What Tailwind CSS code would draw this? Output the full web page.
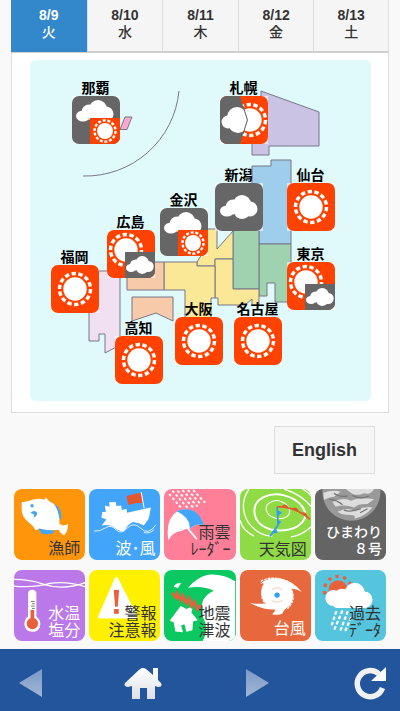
<!DOCTYPE html>
<html lang="ja">
<head>
  <meta charset="UTF-8">
  <meta name="viewport" content="width=device-width, initial-scale=1.0">
  <title>海の天気</title>
  <script src="https://cdn.jsdelivr.net/npm/@tailwindcss/browser@4"></script>
</head>
<body class="bg-[#f9f9f9] min-h-screen flex flex-col font-['Liberation_Sans','Noto_Sans_CJK_JP',sans-serif] text-[#333]">

  <!-- shared weather symbols -->
  <svg class="absolute size-0" aria-hidden="true">
    <defs>
      <g id="sun">
        <circle r="11.700" fill="#fff"/>
        <circle r="15.500" fill="none" stroke="#fff" stroke-width="3.400" pathLength="42" stroke-dasharray="1.900 1.100"/>
      </g>
      <g id="cloud" fill="#fff">
        <ellipse cx="-12" cy="4" rx="7" ry="5.500"/>
        <circle cx="-6" cy="0" r="7.500"/>
        <circle cx="3" cy="-3" r="9"/>
        <circle cx="11" cy="2" r="7.500"/>
        <ellipse cx="3" cy="7" rx="7" ry="5"/>
      </g>
      <clipPath id="tile"><rect width="48" height="48" rx="7"/></clipPath>
      <clipPath id="left-half"><path d="M0 0H20L27 24L20 48H0Z"/></clipPath>
      <symbol id="w-sun" viewBox="0 0 48 48">
        <rect width="48" height="48" fill="#fff" opacity=".6"/>
        <rect width="48" height="48" rx="7" fill="#ff4200"/>
        <use href="#sun" x="24" y="24"/>
      </symbol>
      <symbol id="w-cloud" viewBox="0 0 48 48">
        <rect width="48" height="48" fill="#fff" opacity=".6"/>
        <rect width="48" height="48" rx="7" fill="#666"/>
        <use href="#cloud" x="24" y="24"/>
      </symbol>
      <symbol id="w-cloud-sun" viewBox="0 0 48 48">
        <rect width="48" height="48" fill="#fff" opacity=".6"/>
        <g clip-path="url(#tile)">
          <rect width="48" height="48" fill="#666"/>
          <use href="#cloud" x="23" y="16"/>
          <rect x="18" y="22" width="30" height="26" fill="#ff4200"/>
          <use href="#sun" transform="translate(33 35) scale(.68)"/>
        </g>
      </symbol>
      <symbol id="w-sun-cloud" viewBox="0 0 48 48">
        <rect width="48" height="48" fill="#fff" opacity=".6"/>
        <g clip-path="url(#tile)">
          <rect width="48" height="48" fill="#ff4200"/>
          <use href="#sun" x="19" y="20"/>
          <rect x="18" y="22" width="30" height="26" fill="#666"/>
          <use href="#cloud" transform="translate(33 35) scale(.74)"/>
        </g>
      </symbol>
      <symbol id="w-cloud-then-sun" viewBox="0 0 48 48">
        <rect width="48" height="48" fill="#fff" opacity=".6"/>
        <g clip-path="url(#tile)">
          <rect width="48" height="48" fill="#ff4200"/>
          <use href="#sun" x="30" y="24"/>
          <g clip-path="url(#left-half)">
            <rect width="48" height="48" fill="#666"/>
            <circle cx="8" cy="26" r="6.500" fill="#fff"/>
            <circle cx="17" cy="21" r="10" fill="#fff"/>
            <circle cx="18" cy="27" r="10" fill="#fff"/>
          </g>
          <path d="M23 10L27.500 24L23 38" fill="none" stroke="#666"/>
        </g>
      </symbol>
    </defs>
  </svg>

  <main class="px-[11px]">
    <nav class="grid grid-cols-5 h-[53px] border-b-2 border-[#d0d0d0] text-center text-sm font-bold leading-[17px]">
      <a href="#d9" class="bg-[#3388cc] text-white pt-[7px] -mb-px">8/9<br><span class="font-medium">火</span></a>
      <a href="#d10" class="bg-[#f5f5f5] border-l border-[#ddd] pt-[7px]">8/10<br><span class="font-medium">水</span></a>
      <a href="#d11" class="bg-[#f5f5f5] border-l border-[#ddd] pt-[7px]">8/11<br><span class="font-medium">木</span></a>
      <a href="#d12" class="bg-[#f5f5f5] border-l border-[#ddd] pt-[7px]">8/12<br><span class="font-medium">金</span></a>
      <a href="#d13" class="bg-[#f5f5f5] border-l border-r border-[#ddd] pt-[7px]">8/13<br><span class="font-medium">土</span></a>
    </nav>

    <section class="bg-white border border-t-0 border-[#ddd] pt-[7px] pb-[11px]">
      <div class="relative w-[341px] mx-auto rounded-md bg-[#e0fafb] text-sm leading-4 font-bold text-black">
        <svg viewBox="30 60 341 341" class="block w-full" stroke="#778" stroke-width="1">
          <path d="M179 91A94 94 0 0 1 83 176" fill="none"/>
          <path d="M125 117H132L127 129.500H120Z" fill="#f9a8d0"/>
          <path d="M261 91L319 112V146H269V155H252V130H261Z" fill="#cbc3e3"/>
          <path d="M252 166H271V160H291V244H259V215H252Z" fill="#9fcdec"/>
          <path d="M259 244H291V302H275V283H267V296H259Z" fill="#9fd2ae"/>
          <path d="M233 225H259V289H233Z" fill="#9fd2ae"/>
          <path d="M200 229H217V249L233 231V259H215V266H197V262L202 254Z" fill="#fbe896"/>
          <path d="M215 259H233V289H259V305H252V299L245 305H218V298H215Z" fill="#fbe896"/>
          <path d="M164 262H197V266H215V298H211V320H185V290H164Z" fill="#fbe896"/>
          <path d="M127 262H164V290H127Z" fill="#f7cba9"/>
          <path d="M132 297H173V321L156 313L132 321Z" fill="#f7cba9"/>
          <path d="M89 271H120V345L105 353V334H99V341H89Z" fill="#f0e0f2"/>
        </svg>

        <a href="#naha" class="absolute left-[42px] top-[20px] w-12 flex flex-col items-center whitespace-nowrap">那覇<svg class="size-12"><use href="#w-cloud-sun"/></svg></a>
        <a href="#sapporo" class="absolute left-[190px] top-[20px] w-12 flex flex-col items-center whitespace-nowrap">札幌<svg class="size-12"><use href="#w-cloud-then-sun"/></svg></a>
        <a href="#niigata" class="absolute left-[185px] top-[107px] w-12 flex flex-col items-center whitespace-nowrap">新潟<svg class="size-12"><use href="#w-cloud"/></svg></a>
        <a href="#sendai" class="absolute left-[257px] top-[107px] w-12 flex flex-col items-center whitespace-nowrap">仙台<svg class="size-12"><use href="#w-sun"/></svg></a>
        <a href="#kanazawa" class="absolute left-[130px] top-[132px] w-12 flex flex-col items-center whitespace-nowrap">金沢<svg class="size-12"><use href="#w-cloud-sun"/></svg></a>
        <a href="#hiroshima" class="absolute left-[77px] top-[154px] w-12 flex flex-col items-center whitespace-nowrap">広島<svg class="size-12"><use href="#w-sun-cloud"/></svg></a>
        <a href="#fukuoka" class="absolute left-[21px] top-[189px] w-12 flex flex-col items-center whitespace-nowrap">福岡<svg class="size-12"><use href="#w-sun"/></svg></a>
        <a href="#tokyo" class="absolute left-[257px] top-[186px] w-12 flex flex-col items-center whitespace-nowrap">東京<svg class="size-12"><use href="#w-sun-cloud"/></svg></a>
        <a href="#kochi" class="absolute left-[85px] top-[260px] w-12 flex flex-col items-center whitespace-nowrap">高知<svg class="size-12"><use href="#w-sun"/></svg></a>
        <a href="#osaka" class="absolute left-[145px] top-[241px] w-12 flex flex-col items-center whitespace-nowrap">大阪<svg class="size-12"><use href="#w-sun"/></svg></a>
        <a href="#nagoya" class="absolute left-[204px] top-[241px] w-12 flex flex-col items-center whitespace-nowrap">名古屋<svg class="size-12"><use href="#w-sun"/></svg></a>
      </div>
    </section>

    <div class="flex justify-end pt-[13px] pr-[14px]">
      <button type="button" class="h-12 px-[17px] border border-[#ddd] bg-[#f6f6f6] text-lg font-bold">English</button>
    </div>
  </main>

  <!-- menu -->
  <div class="grid grid-cols-5 gap-x-1 gap-y-[10px] px-[14px] pt-[15px] pb-2 font-['Noto_Sans_CJK_JP',sans-serif] text-base leading-[17px] text-right">
    <a href="#fisher" class="relative aspect-square rounded-lg overflow-hidden bg-[#ff950a] text-[#333]">
      <svg viewBox="43 27 213 213" class="block w-full">
        <path d="M158 70Q188 82 184 118L170 112Z" fill="#42a5f5"/>
        <path d="M115 142L125 160Q148 166 162 158V140Z" fill="#42a5f5"/>
        <path d="M66 67L84 64Q110 52 134 59L138 52Q150 68 162 71Q180 95 179 132Q192 140 205 132Q204 155 193 166Q183 162 176 149Q145 153 118 145L108 151Q100 135 84 124Q66 108 66 88Z" fill="#fff"/>
        <circle cx="97" cy="77" r="5" fill="#42a5f5"/>
        <path d="M92 98Q105 88 112 98Q113 108 102 112L103 103Z" fill="#42a5f5"/>
      </svg>
      <span class="absolute right-[5px] bottom-1 whitespace-nowrap">漁師</span>
    </a>
    <a href="#wave" class="relative aspect-square rounded-lg overflow-hidden bg-[#42a5fa] text-white">
      <svg viewBox="268 27 213 213" class="block w-full">
        <path d="M306 136L320 118L305 112L308 96L318 96L316 76L330 80L328 67L348 66L350 78L364 76L366 90L380 86L382 98L453 82L447 115L432 136Q418 128 400 126Q385 132 374 151Q360 158 342 141Q328 132 306 136Z" fill="#fff"/>
        <path d="M283 153Q300 155 318 143Q334 132 350 150Q366 164 382 144Q402 124 422 144Q446 168 468 134M432 157Q450 162 463 148" fill="none" stroke="#fff" stroke-width="2.500"/>
        <path d="M380 48Q400 42 425 38L430 68Q405 68 386 75Z" fill="#e4572e"/>
        <path d="M424 36L433 84" stroke="#fff" stroke-width="3"/>
      </svg>
      <span class="absolute right-[5px] bottom-1 whitespace-nowrap">波･風</span>
    </a>
    <a href="#radar" class="relative aspect-square rounded-lg overflow-hidden bg-[#ff7f99] text-[#333]">
      <svg viewBox="493 27 213 213" class="block w-full">
        <g stroke="#fff" stroke-width="6" stroke-linecap="round" stroke-dasharray="3 12">
          <path d="M510 44L545 84M520 34L562 82M535 34L578 80M550 32L592 78M566 32L605 75M582 32L614 66"/>
        </g>
        <path d="M506 180Q496 115 535 92Q590 75 613 136Q590 128 570 146Q560 142 546 153Q520 155 506 180Z" fill="#fff"/>
        <path d="M530 93Q592 72 613 136Q592 128 570 146Q572 112 530 93Z" fill="#42a5fa"/>
        <path d="M560 140L590 176" stroke="#fff" stroke-width="5" stroke-linecap="round"/>
      </svg>
      <span class="absolute right-[5px] bottom-[3px] whitespace-nowrap">雨雲<br>ﾚｰﾀﾞｰ</span>
    </a>
    <a href="#chart" class="relative aspect-square rounded-lg overflow-hidden bg-[#8edb45] text-[#333]">
      <svg viewBox="118 27 213 213" class="block w-full">
        <g fill="none" stroke="#fff">
          <path d="M196 88C194 68 225 55 244 66C265 75 275 98 258 110C235 124 200 112 196 88Z" stroke-width="3"/>
          <path d="M161 94C160 52 210 36 250 46C300 58 328 100 305 125C285 150 245 155 210 148C180 140 162 120 161 94Z" stroke-width="6"/>
          <path d="M145 27C115 70 125 130 180 160Q195 168 215 168M250 27Q305 45 331 80M331 140Q300 168 270 170M305 27Q320 35 331 48M118 120Q125 150 160 168" stroke-width="4"/>
        </g>
        <path d="M229 80L232 135L208 168" fill="none" stroke="#2f9df5" stroke-width="5"/>
        <path d="M230 90L244 98L231 108ZM231 118L242 126L231 136ZM226 146L231 158L215 160Z" fill="#2f9df5"/>
        <path d="M229 80Q285 80 328 118" fill="none" stroke="#e4572e" stroke-width="5"/>
        <path d="M242 79Q252 66 264 82ZM272 86Q288 76 295 95ZM300 98Q318 92 320 110Z" fill="#e4572e"/>
      </svg>
      <span class="absolute right-[4px] bottom-[3px] whitespace-nowrap">天気図</span>
    </a>
    <a href="#himawari" class="relative aspect-square rounded-lg overflow-hidden bg-[#646464] text-white">
      <svg viewBox="343 27 213 213" class="block w-full">
        <circle cx="452" cy="35" r="87" fill="#999"/>
        <path d="M368 38Q395 28 420 35L400 50Q380 52 370 60ZM435 27H520Q510 45 490 40Q465 50 450 38ZM395 66Q430 50 450 62Q480 50 520 58L500 72Q475 70 460 82Q430 72 405 80ZM410 95Q440 80 462 92Q490 78 515 82Q495 108 460 116Q470 104 440 104Q425 106 410 95Z" fill="#ddd"/>
        <path d="M385 58Q410 60 425 74M455 46Q480 60 505 48M430 90Q450 98 480 86M478 98L500 86M400 40Q415 52 440 48" fill="none" stroke="#777" stroke-width="4"/>
      </svg>
      <span class="absolute right-[4px] bottom-[3px] text-sm leading-[17px] font-medium whitespace-nowrap">ひまわり<br>８号</span>
    </a>
    <a href="#temp" class="relative aspect-square rounded-lg overflow-hidden bg-[#bb78e8] text-white">
      <svg viewBox="43 28 213 213" class="block w-full">
        <path d="M43 56Q90 56 130 70Q190 90 256 66M43 76Q100 82 150 68Q200 60 256 78" fill="none" stroke="#fff" stroke-width="4"/>
        <path d="M85 98Q86 87 97 87Q109 87 110 98V167Q122 177 122 190Q119 213 98 213Q76 211 74 190Q75 174 85 167Z" fill="#fff"/>
        <circle cx="98" cy="188" r="17" fill="#e8603c"/>
        <path d="M98 148V180" stroke="#e8603c" stroke-width="11"/>
        <path d="M94 122H105M97 129H105M94 136H105M97 143H105" stroke="#555" stroke-width="2.500"/>
      </svg>
      <span class="absolute right-[5px] bottom-[3px] whitespace-nowrap">水温<br>塩分</span>
    </a>
    <a href="#warning" class="relative aspect-square rounded-lg overflow-hidden bg-[#fff000] text-[#333]">
      <svg viewBox="268 28 213 213" class="block w-full">
        <path d="M350 54L408 168H300Z" fill="#fff" stroke="#fff" stroke-width="10" stroke-linejoin="round"/>
        <path d="M342 88H358L354 138H346ZM343 145H357V159H343Z" fill="#e8603c"/>
      </svg>
      <span class="absolute right-[4px] bottom-[3px] whitespace-nowrap">警報<br>注意報</span>
    </a>
    <a href="#quake" class="relative aspect-square rounded-lg overflow-hidden bg-[#0bc861] text-[#333]">
      <svg viewBox="493 28 213 213" class="block w-full">
        <path d="M522 78Q530 64 545 68Q538 74 535 82ZM565 81Q590 50 625 42Q670 38 706 62V241H608Q630 205 610 170Q600 145 610 118Q620 100 642 90Q610 74 565 81Z" fill="#fff"/>
        <path d="M517 96L530 112L532 98L545 120L550 104L560 128L568 112L575 138L584 122L592 146L604 132" fill="none" stroke="#e8603c" stroke-width="8"/>
        <path d="M510 180L543 136L560 145L570 140L578 145L575 155L594 178L580 182L578 208L560 213L554 190L544 194L550 214L527 212L522 184Z" fill="#fff"/>
      </svg>
      <span class="absolute right-[5px] bottom-[3px] whitespace-nowrap">地震<br>津波</span>
    </a>
    <a href="#typhoon" class="relative aspect-square rounded-lg overflow-hidden bg-[#e6683c] text-white">
      <svg viewBox="118 28 213 213" class="block w-full">
        <path d="M178 70Q200 48 240 54Q276 60 303 94Q288 84 272 84Q284 115 264 137Q250 145 245 158Q236 164 214 160Q225 152 222 146Q190 148 148 127Q175 131 195 128Q176 108 184 78Q196 62 178 70Z" fill="#fff"/>
        <path d="M180 62Q225 38 276 72M272 88Q286 118 260 144M186 86Q178 108 192 126" fill="none" stroke="#fff" stroke-width="4" stroke-dasharray="8 3"/>
        <path d="M212 88Q228 74 246 88M246 118Q228 130 212 118" fill="none" stroke="#f2b6a0" stroke-width="2"/>
        <circle cx="229" cy="103" r="8" fill="#2f9df5"/>
      </svg>
      <span class="absolute right-[5px] bottom-[5px] whitespace-nowrap">台風</span>
    </a>
    <a href="#past" class="relative aspect-square rounded-lg overflow-hidden bg-[#55c5dd] text-[#333]">
      <svg viewBox="343 28 213 213" class="block w-full">
        <circle cx="412" cy="88" r="29" fill="#e8603c"/>
        <circle cx="412" cy="88" r="41" fill="none" stroke="#e8603c" stroke-width="10" stroke-dasharray="10 13"/>
        <g fill="#fff">
          <circle cx="398" cy="112" r="24"/>
          <circle cx="424" cy="108" r="24"/>
          <circle cx="462" cy="96" r="30"/>
          <circle cx="490" cy="117" r="25"/>
          <rect x="396" y="110" width="98" height="32" rx="14"/>
        </g>
        <g stroke="#fff" stroke-width="7" stroke-linecap="round" stroke-dasharray="5 12">
          <path d="M406 154L392 196M424 152L400 208M440 154L418 212M450 172L432 214"/>
        </g>
      </svg>
      <span class="absolute right-[5px] bottom-[3px] whitespace-nowrap">過去<br>ﾃﾞｰﾀ</span>
    </a>
  </div>

  <footer class="mt-auto h-[62px] bg-[#22559b] flex items-center justify-between px-[10px] pt-[6px]">
    <button type="button" aria-label="戻る" class="size-10">
      <svg viewBox="0 0 40 40"><path d="M9 20L32 6V34Z" fill="url(#fade)"/>
        <defs>
          <linearGradient id="fade" x1="0" y1="0" x2="0" y2="1"><stop stop-color="#7b9ac6"/><stop offset="1" stop-color="#a0b5d5"/></linearGradient>
          <linearGradient id="metal" x1="0" y1="0" x2="0" y2="1"><stop stop-color="#fff"/><stop offset="1" stop-color="#dcdfe6"/></linearGradient>
        </defs>
      </svg>
    </button>
    <button type="button" aria-label="ホーム" class="size-10">
      <svg viewBox="0 0 40 40"><path d="M20 5Q22 5 23 6L30 12V5H35V17L38 20Q40 24 35 24L32 23V36H24V25H17V36H9V23L5 24Q0 23 2 20L17 6Q18 5 20 5Z" fill="url(#metal)"/></svg>
    </button>
    <button type="button" aria-label="進む" class="size-10">
      <svg viewBox="0 0 40 40"><path d="M32 20L9 6V34Z" fill="url(#fade)"/></svg>
    </button>
    <button type="button" aria-label="更新" class="size-10">
      <svg viewBox="0 0 40 40"><path d="M32.500 25A13 13 0 1 1 29 11" fill="none" stroke="#f0f1f4" stroke-width="5.500"/><path d="M36 4V18H21Z" fill="#fafafa"/></svg>
    </button>
  </footer>
</body>
</html>
